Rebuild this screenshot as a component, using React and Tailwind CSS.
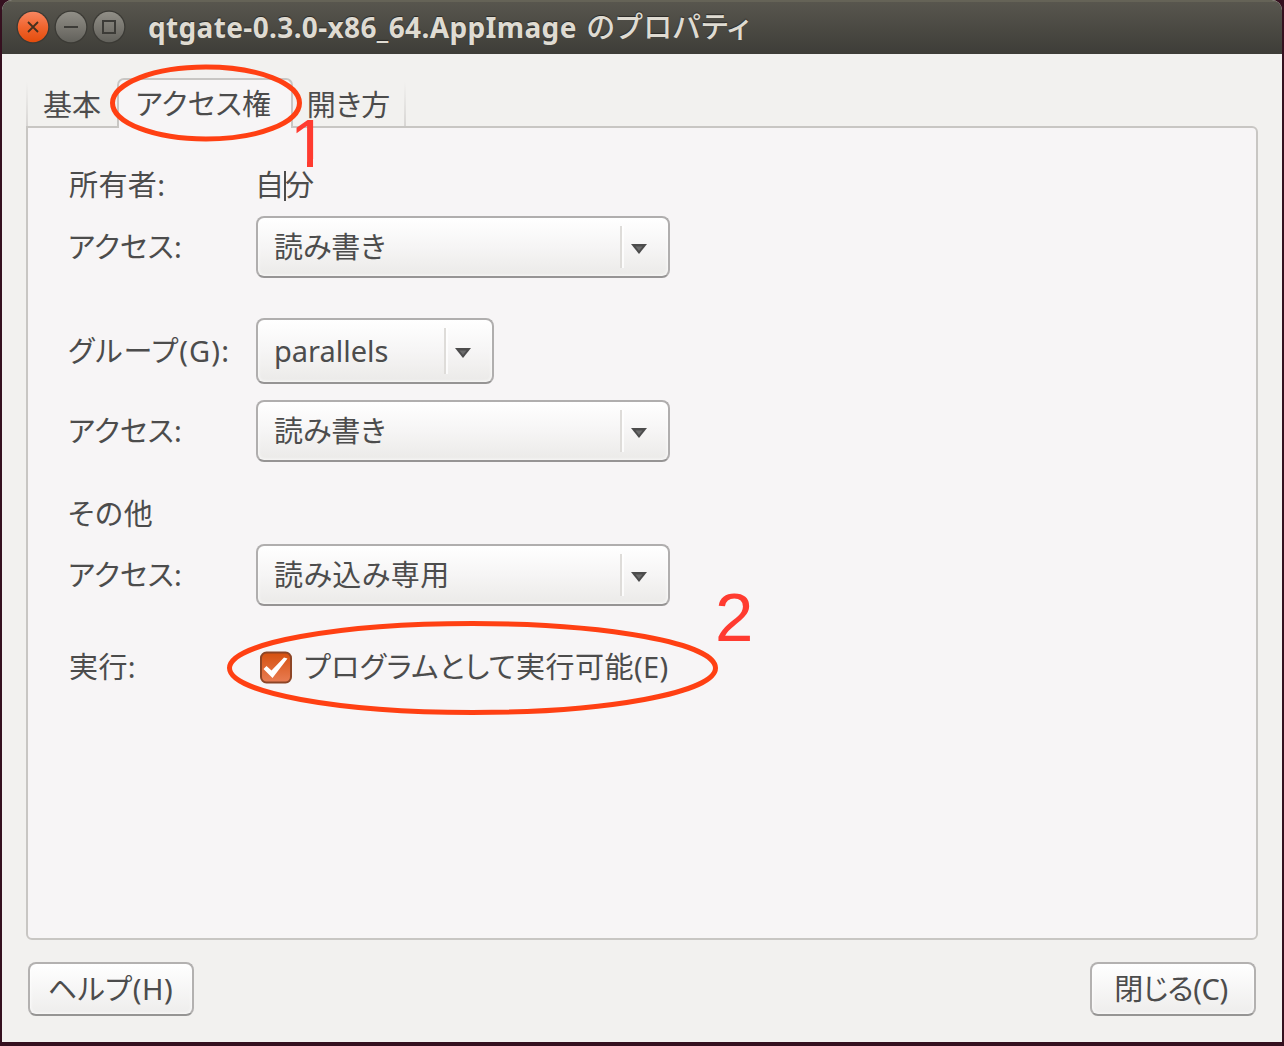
import React from "react";

function Label({ children, className = "" }) {
  return (
    <span className={"inline-block whitespace-pre pb-[2px] leading-none [font-feature-settings:'palt'] " + className}>
      {children}
    </span>
  );
}

function WindowButton({ kind }) {
  const close = kind === "close";
  return (
    <svg width="34" height="34" viewBox="0 0 34 34" className="-mt-[2px] shrink-0">
      <defs>
        <linearGradient id={"face-" + kind} x1="0" y1="0" x2="0" y2="1">
          <stop offset="0" stopColor={close ? "#f88660" : "#918f87"} />
          <stop offset="0.5" stopColor={close ? "#f0652f" : "#7a7871"} />
          <stop offset="1" stopColor={close ? "#e44c0c" : "#62615b"} />
        </linearGradient>
      </defs>
      <circle cx="17" cy="17" r="16.5" fill="#3b3a35" />
      <circle cx="17" cy="17" r="15.2" fill={`url(#face-${kind})`} />
      {close && <path d="M12 12 L22 22 M22 12 L12 22" stroke="#45301f" strokeWidth="1.8" fill="none" />}
      {kind === "min" && <path d="M10 17 H24" stroke="#3c3b37" strokeWidth="2" />}
      {kind === "max" && <rect x="11" y="11" width="12" height="12" stroke="#3c3b37" strokeWidth="2" fill="none" />}
    </svg>
  );
}

function Combo({ children, className }) {
  return (
    <div
      className={
        "flex shrink-0 items-center justify-between rounded-[8px] border-2 border-[#b0aeae] border-b-[#969494] bg-linear-to-b from-white via-[#f6f5f5] to-[#ebeae8] pl-[16px] shadow-[inset_0_0_3px_1px_#ffffffb0] " +
        className
      }
    >
      {children}
      <div className="flex h-full items-center py-2">
        <div className="h-full w-[4px] border-x-2 border-l-[#dedcd9] border-r-[#ffffffc0]" />
        <svg width="44" height="12" viewBox="0 0 44 12" className="mt-[3px]">
          <path d="M7 1 H23 L15 11 Z" fill="#4c4c4c" />
          <path d="M11.500 3.500 H18.500 L15 8 Z" fill="#6c6c6c" />
        </svg>
      </div>
    </div>
  );
}

function Row({ label, labelClass, className, children }) {
  return (
    <div className={"flex items-center " + className}>
      <div className="flex w-[187px] shrink-0">
        <Label className={labelClass}>{label}</Label>
      </div>
      {children}
    </div>
  );
}

function Button({ children }) {
  return (
    <div className="flex h-[54px] w-[166px] items-center justify-center rounded-[8px] border-2 border-[#b3b1b0] border-b-[#969594] bg-linear-to-b from-white to-[#eeedec] shadow-[inset_0_0_3px_1px_#ffffffb0]">
      {children}
    </div>
  );
}

export default function App() {
  return (
    <div className="relative h-[1046px] w-[1284px] overflow-hidden bg-[#35101f] px-[2px] pb-[4px] font-['Noto_Sans','Noto_Sans_CJK_JP',sans-serif] text-[29px] text-[#4c4c4c]">
      <div className="flex h-full flex-col overflow-hidden rounded-t-[10px] bg-[#f2f1ef]">
        <header className="flex h-[54px] shrink-0 items-center gap-[4px] border-t-2 border-[#656357] bg-linear-to-b from-[#58564e] to-[#3e3d38] pl-[14px]">
          <WindowButton kind="close" />
          <WindowButton kind="min" />
          <WindowButton kind="max" />
          <h1 className="-mt-[3px] ml-[18px] flex items-center leading-none font-bold whitespace-pre text-[#dfdbd2] [text-shadow:0_-1px_1px_#2b2a27]">
            <span className="text-[28px] tracking-[0.36px]">qtgate-0.3.0-x86_64.AppImage</span>
            <span className="-mt-[2px] ml-[10px] font-['Noto_Sans_CJK_JP',sans-serif] font-medium tracking-[1.1px] [font-feature-settings:'palt']">のプロパティ</span>
          </h1>
        </header>

        <nav className="relative z-10 mt-[24px] -mb-[2px] ml-[24px] flex h-[50px] shrink-0 items-end">
          <div className="mb-[2px] h-[44px] w-[2px] bg-linear-to-b from-[#f2f1ef] to-[#d8d6d4]" />
          <div className="flex h-[48px] w-[89px] items-center justify-center border-b-2 border-[#c8c6c3] pt-[4px] pr-[1px]">
            <Label>基本</Label>
          </div>
          <div className="flex h-[50px] w-[176px] items-center justify-center rounded-t-[7px] border-2 border-b-0 border-[#c8c6c3] bg-[#f7f5f6] pr-[3px]">
            <Label className="tracking-[0.3px]">アクセス権</Label>
          </div>
          <div className="flex h-[48px] w-[111px] items-center justify-center border-b-2 border-[#c8c6c3] pt-[4px]">
            <Label>開き方</Label>
          </div>
          <div className="mb-[2px] h-[44px] w-[2px] bg-linear-to-b from-[#f2f1ef] to-[#d8d6d4]" />
        </nav>

        <main className="mx-[24px] h-[814px] shrink-0 rounded-[6px] rounded-tl-none border-2 border-[#c8c6c3] bg-[#f7f5f6] pt-[27px] pl-[41px]">
          <Row label="所有者:" labelClass="tracking-[0.4px]" className="h-[61px]">
            <div className="flex items-center">
              <Label className="-ml-px">自</Label>
              <div className="-mr-px h-[30px] w-[2px] bg-[#4c4c4c]" />
              <Label>分</Label>
            </div>
          </Row>
          <Row label="アクセス:" labelClass="-ml-px tracking-[0.2px]" className="h-[62px]">
            <Combo className="h-[62px] w-[414px]"><Label>読み書き</Label></Combo>
          </Row>
          <Row label="グループ(G):" labelClass="-ml-px tracking-[1.1px]" className="mt-[40px] h-[66px]">
            <Combo className="h-[66px] w-[238px]"><Label>parallels</Label></Combo>
          </Row>
          <Row label="アクセス:" labelClass="-ml-px tracking-[0.2px]" className="mt-[16px] h-[62px]">
            <Combo className="h-[62px] w-[414px]"><Label>読み書き</Label></Combo>
          </Row>
          <Row label="その他" labelClass="-ml-px tracking-[0.8px]" className="mt-[22px] h-[60px]" />
          <Row label="アクセス:" labelClass="-ml-px tracking-[0.2px]" className="h-[62px]">
            <Combo className="h-[62px] w-[414px]"><Label className="tracking-[0.5px]">読み込み専用</Label></Combo>
          </Row>
          <Row label="実行:" labelClass="tracking-[0.4px]" className="mt-[31px] h-[60px]">
            <svg width="34" height="34" viewBox="0 0 34 34" className="ml-[2px]">
              <defs>
                <linearGradient id="check" x1="0" y1="0" x2="0" y2="1">
                  <stop offset="0" stopColor="#d5500f" />
                  <stop offset="1" stopColor="#e97d54" />
                </linearGradient>
              </defs>
              <rect x="3" y="2.500" width="30" height="30" rx="5.500" fill="url(#check)" stroke="#8d4526" strokeWidth="2" />
              <path d="M5.500 19 L8.500 16 L13.500 20.500 L26 7.500 L29.500 8.500 L14.500 28 Z" fill="#fff" />
            </svg>
            <Label className="ml-[12px] tracking-[0.45px]">プログラムとして実行可能(E)</Label>
          </Row>
        </main>

        <footer className="mt-[22px] flex justify-between px-[26px]">
          <Button><Label className="pr-[1px] tracking-[0.6px]">ヘルプ(H)</Label></Button>
          <Button><Label className="pr-[4px] -tracking-[0.4px]">閉じる(C)</Label></Button>
        </footer>
      </div>

      <svg width="1284" height="1046" className="pointer-events-none absolute inset-0 z-20">
        <ellipse cx="206" cy="103" rx="93.500" ry="36" fill="none" stroke="#ff4013" strokeWidth="5" />
        <ellipse cx="472.500" cy="668" rx="243" ry="44.500" fill="none" stroke="#ff4013" strokeWidth="5" />
      </svg>
      <span className="absolute top-[109px] left-[290px] z-20 font-['Liberation_Sans',sans-serif] text-[68px] leading-[68px] text-[#ff3b30] [clip-path:polygon(0_0,100%_0,100%_50px,23px_50px,23px_100%,17px_100%,17px_50px,0_50px)]">1</span>
      <span className="absolute top-[584px] left-[715px] z-20 font-['Liberation_Sans',sans-serif] text-[69px] leading-[68px] text-[#ff3b30]">2</span>
    </div>
  );
}
